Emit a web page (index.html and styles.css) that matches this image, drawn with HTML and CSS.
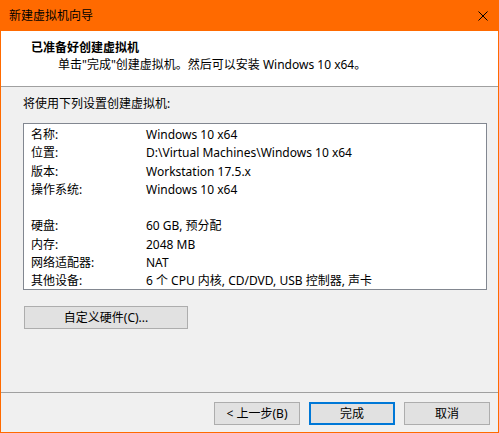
FILE: index.html
```html
<!DOCTYPE html>
<html lang="zh-CN">
<head>
<meta charset="utf-8">
<title>新建虚拟机向导</title>
<link rel="stylesheet" href="styles.css">
</head>
<body>
<div class="window">
  <div class="titlebar">
    <span class="title">新建虚拟机向导</span>
    <svg class="close" width="10" height="10" viewBox="0 0 10 10"><path d="M0.5 0.5 L9.5 9.5 M9.5 0.5 L0.5 9.5" stroke="#000" stroke-width="1" fill="none"/></svg>
  </div>
  <div class="header">
    <div class="h-title">已准备好创建虚拟机</div>
    <div class="h-sub">单击"完成"创建虚拟机。然后可以安装 Windows 10 x64。</div>
  </div>
  <div class="content">
    <div class="intro">将使用下列设置创建虚拟机:</div>
    <div class="summary">
      <div class="row"><span class="k">名称:</span><span class="v">Windows 10 x64</span></div>
      <div class="row"><span class="k">位置:</span><span class="v">D:\Virtual Machines\Windows 10 x64</span></div>
      <div class="row"><span class="k">版本:</span><span class="v">Workstation 17.5.x</span></div>
      <div class="row"><span class="k">操作系统:</span><span class="v">Windows 10 x64</span></div>
      <div class="row"></div>
      <div class="row"><span class="k">硬盘:</span><span class="v">60 GB, 预分配</span></div>
      <div class="row"><span class="k">内存:</span><span class="v">2048 MB</span></div>
      <div class="row"><span class="k">网络适配器:</span><span class="v">NAT</span></div>
      <div class="row"><span class="k">其他设备:</span><span class="v">6 个 CPU 内核, CD/DVD, USB 控制器, 声卡</span></div>
    </div>
    <button class="btn custom">自定义硬件(C)...</button>
  </div>
  <div class="footer">
    <button class="btn">&lt; 上一步(B)</button>
    <button class="btn primary">完成</button>
    <button class="btn">取消</button>
  </div>
</div>
</body>
</html>
```
FILE: styles.css
```css
* { box-sizing: border-box; }
html, body { margin: 0; padding: 0; }
body {
  font-family: "Noto Sans", "Noto Sans CJK SC", sans-serif;
  font-size: 12px;
  color: #000;
  background: #f0f0f0;
}
.window {
  width: 499px;
  height: 433px;
  border: 1px solid #ff6a00;
  border-top: 0;
  display: flex;
  flex-direction: column;
  background: #f0f0f0;
}
.titlebar {
  height: 31px;
  margin: 0 -1px;
  background: #ff6a00;
  display: flex;
  align-items: center;
  justify-content: space-between;
  padding: 0 11px 0 9px;
}
.title { font-size: 12px; line-height: 16px; }
.close { display: block; }
.header {
  height: 56px;
  background: #fff;
  border-bottom: 1px solid #a0a0a0;
  padding: 9px 0 0 30px;
}
.h-title {
  font-weight: bold;
  line-height: 16px;
  height: 16px;
}
.h-sub {
  padding-left: 27px;
  line-height: 16px;
  margin-top: 1px;
}
.content {
  flex: 1;
  padding: 9px 0 0 22px;
  border-bottom: 1px solid #a0a0a0;
}
.intro { line-height: 16px; height: 16px; }
.summary {
  margin-top: 11px;
  width: 464px;
  height: 167px;
  background: #fff;
  border: 1px solid #828790;
  padding: 2px 0 0 7px;
}
.row {
  display: flex;
  height: 18.3px;
  line-height: 18px;
  white-space: nowrap;
}
.k { width: 115px; flex: none; }
.v { flex: none; }
.btn {
  font: inherit;
  color: #000;
  background: #e1e1e1;
  border: 1px solid #adadad;
  width: 86px;
  height: 23px;
  padding: 0;
  margin: 0;
  line-height: 19px;
}
.custom {
  width: 164px;
  margin: 16px 0 0 1px;
  display: block;
}
.footer {
  height: 39px;
  display: flex;
  justify-content: flex-end;
  align-items: flex-start;
  gap: 9px;
  padding: 9px 8px 0 0;
}
.primary {
  border: 2px solid #0078d7;
}
```
